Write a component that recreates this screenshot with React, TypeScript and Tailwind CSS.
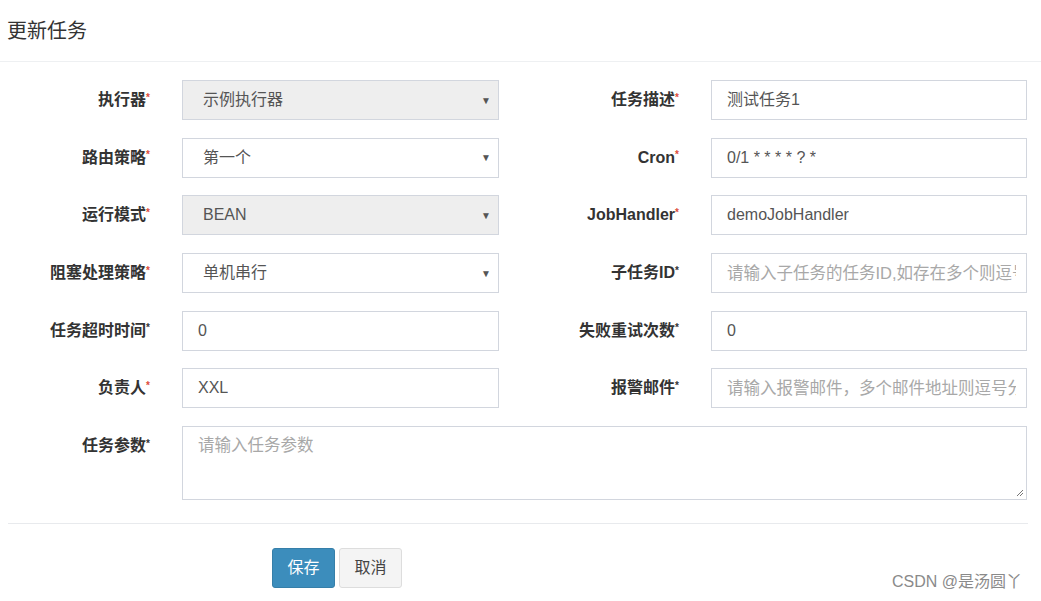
import React, { FunctionComponent } from 'react';

interface FieldProps {
  label: string;
  red?: boolean;
  children: React.ReactNode;
}

const font = 'font-["Liberation_Sans","Noto_Sans_CJK_SC",sans-serif]';

const Label: FunctionComponent<{ label: string; red?: boolean }> = ({ label, red }) => (
  <div className="flex h-[40px] items-center justify-end pr-[32px] text-[16px] font-bold text-[#333]">
    <span>{label}</span>
    <span className={red ? 'mb-[6px] text-[10px] text-[#dd4b39]' : 'mb-[6px] text-[10px] text-[#333]'}>*</span>
  </div>
);

const Field: FunctionComponent<FieldProps> = ({ label, red, children }) => (
  <>
    <Label label={label} red={red} />
    {children}
  </>
);

const Select: FunctionComponent<{ value: string; disabled?: boolean }> = ({ value, disabled }) => (
  <div
    className={`flex h-[40px] items-center justify-between border border-[#d2d6de] pl-[20px] pr-[7px] text-[16px] text-[#555] ${disabled ? 'bg-[#eee]' : 'bg-white'}`}
  >
    <span>{value}</span>
    <span className="text-[10px] text-[#555]">▼</span>
  </div>
);

const Input: FunctionComponent<{ value?: string; placeholder?: string }> = ({ value, placeholder }) => (
  <div className="flex h-[40px] items-center border border-[#d2d6de] bg-white pl-[15px] pr-[10px] text-[16px]">
    <div className="overflow-hidden whitespace-nowrap">
      {value ? (
        <span className="text-[#555]">{value}</span>
      ) : (
        <span className="text-[16.5px] text-[#a8a8a8]">{placeholder}</span>
      )}
    </div>
  </div>
);

const App: FunctionComponent = () => (
  <div className={`relative h-[601px] w-[1041px] bg-white ${font}`}>
    <div className="h-[61px] px-[7px] pt-[16px] text-[20px] text-[#333]">更新任务</div>
    <div className="h-[1px] bg-[#eef0f2]" />

    <div className="grid grid-cols-[182px_317px_212px_316px] gap-y-[17.7px] pt-[18px]">
      <Field label="执行器" red>
        <Select value="示例执行器" disabled />
      </Field>
      <Field label="任务描述" red>
        <Input value="测试任务1" />
      </Field>

      <Field label="路由策略" red>
        <Select value="第一个" />
      </Field>
      <Field label="Cron" red>
        <Input value="0/1 * * * * ? *" />
      </Field>

      <Field label="运行模式" red>
        <Select value="BEAN" disabled />
      </Field>
      <Field label="JobHandler" red>
        <Input value="demoJobHandler" />
      </Field>

      <Field label="阻塞处理策略" red>
        <Select value="单机串行" />
      </Field>
      <Field label="子任务ID">
        <Input placeholder="请输入子任务的任务ID,如存在多个则逗号分隔" />
      </Field>

      <Field label="任务超时时间">
        <Input value="0" />
      </Field>
      <Field label="失败重试次数">
        <Input value="0" />
      </Field>

      <Field label="负责人" red>
        <Input value="XXL" />
      </Field>
      <Field label="报警邮件">
        <Input placeholder="请输入报警邮件，多个邮件地址则逗号分隔" />
      </Field>

      <Label label="任务参数" />
      <div className="relative col-span-3 h-[74px] border border-[#d2d6de] bg-white px-[15px] pt-[6px] text-[16.5px] text-[#a8a8a8]">
        请输入任务参数
        <svg className="absolute bottom-[2px] right-[2px]" width="9" height="9" viewBox="0 0 9 9">
          <path d="M8 2 L2 8 M8 5 L5 8" stroke="#777" strokeWidth="1" />
        </svg>
      </div>
    </div>

    <div className="ml-[8px] mr-[13px] mt-[23px] h-[1px] bg-[#e8eaed]" />

    <div className="flex gap-[4px] pl-[272px] pt-[24px]">
      <button className="h-[40px] w-[63px] rounded-[3px] border border-[#367fa9] bg-[#3c8dbc] text-[16px] text-white">保存</button>
      <button className="h-[40px] w-[63px] rounded-[3px] border border-[#ddd] bg-[#f4f4f4] text-[16px] text-[#444]">取消</button>
    </div>

    <div className="absolute bottom-[7px] right-[19px] text-[16px] text-[#8a8a8a]">CSDN @是汤圆丫</div>
  </div>
);

export default App;
